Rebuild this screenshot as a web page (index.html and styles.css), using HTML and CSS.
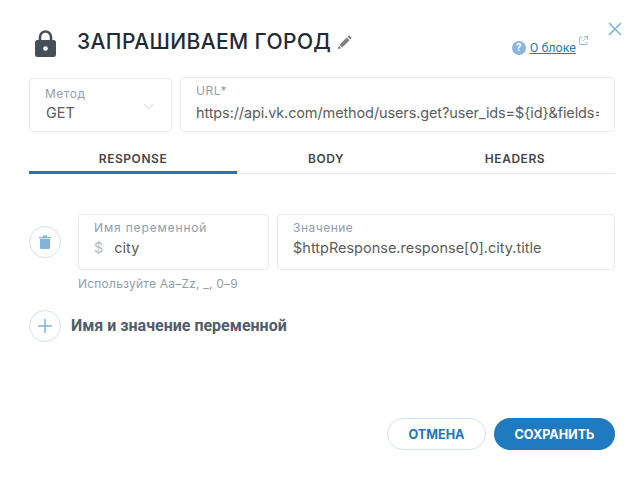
FILE: index.html
```html
<!DOCTYPE html>
<html lang="ru">
<head>
<meta charset="utf-8">
<title>Запрашиваем город</title>
<link rel="stylesheet" href="styles.css">
</head>
<body>
<main class="modal">
  <button class="close" aria-label="Закрыть">
    <svg width="14" height="14" viewBox="0 0 14 14"><path d="M1 1l12 12M13 1L1 13" stroke="#7fb3da" stroke-width="1.6" fill="none"/></svg>
  </button>
  <header class="head">
    <svg class="lock" width="21" height="27" viewBox="0 0 21 27"><path d="M5 11V7a5.500 5.500 0 0 1 11 0v4" fill="none" stroke="#454f5b" stroke-width="2.600"/><rect y="10" width="21" height="17" rx="2.500" fill="#454f5b"/><circle cx="10.500" cy="18.500" r="2.300" fill="#fff"/></svg>
    <h1 class="title">ЗАПРАШИВАЕМ ГОРОД</h1>
    <svg class="pencil" width="15" height="15" viewBox="0 0 16 16"><path d="M1 15l.8-3.800 2.900 2.900zM2.600 10.400l7.800-7.800 3 3-7.800 7.800zM11.200 1.800l1-1a1 1 0 0 1 1.400 0l1.600 1.600a1 1 0 0 1 0 1.400l-1 1z" fill="#808080"/></svg>
    <div class="about">
      <span class="help">?</span>
      <a class="about-link" href="#">О блоке</a>
      <svg class="ext" width="9" height="9" viewBox="0 0 9 9"><path d="M3.500 1H.5v7.500h7.500V5.500M5 .5h3.500V4M8.500 .5L4 5" fill="none" stroke="#7fb3da" stroke-width=".8"/></svg>
    </div>
  </header>

  <section class="request">
    <div class="field method">
      <span class="label">Метод</span>
      <span class="value get">GET</span>
      <svg class="chev" width="11" height="7" viewBox="0 0 11 7"><path d="M.7.7l4.800 4.800L10.300.7" fill="none" stroke="#e2e5e8" stroke-width="1.300"/></svg>
    </div>
    <div class="field url">
      <span class="label">URL*</span>
      <span class="value clip">https://api.vk.com/method/users.get?user_ids=${id}&amp;fields=</span>
    </div>
  </section>

  <nav class="tabs">
    <a class="tab active">RESPONSE</a>
    <a class="tab">BODY</a>
    <a class="tab">HEADERS</a>
  </nav>

  <section class="var-row">
    <button class="round" aria-label="Удалить">
      <svg width="12" height="14" viewBox="0 0 12 14"><path d="M0 2h12v1.300H0zM4 .5h4V2H4zM1 4h10v8.500a1.500 1.500 0 0 1-1.500 1.500h-7A1.500 1.500 0 0 1 1 12.500z" fill="#7fb3da"/></svg>
    </button>
    <div class="field name">
      <span class="label wide">Имя переменной</span>
      <span class="value"><span class="dollar">$</span>city</span>
    </div>
    <div class="field val">
      <span class="label">Значение</span>
      <span class="value">$httpResponse.response[0].city.title</span>
    </div>
  </section>
  <p class="hint">Используйте Aa–Zz, _, 0–9</p>

  <section class="add-row">
    <button class="round" aria-label="Добавить">
      <svg width="14" height="14" viewBox="0 0 14 14"><path d="M7 0v14M0 7h14" stroke="#7fb3da" stroke-width="1.500" fill="none"/></svg>
    </button>
    <span class="add-text">Имя и значение переменной</span>
  </section>

  <footer class="actions">
    <button class="btn ghost">ОТМЕНА</button>
    <button class="btn primary">СОХРАНИТЬ</button>
  </footer>
</main>
</body>
</html>
```
FILE: styles.css
```css
* { box-sizing: border-box; }
html, body { margin: 0; background: #fff; }
body { font-family: "Inter", "Open Sans", sans-serif; color: #454f5b; }
button { font-family: inherit; padding: 0; cursor: pointer; }
.modal { position: relative; width: 642px; height: 479px; padding: 28px 27px 0 29px; overflow: hidden; }
.close { position: absolute; top: 22px; right: 20px; width: 14px; height: 14px; border: 0; background: none; display: flex; }
.head { display: flex; align-items: center; height: 30px; padding-left: 6px; }
.lock { flex: none; }
.title { margin: 0 0 2px 21px; font-size: 21px; line-height: 26px; font-weight: 500; color: #212b36; letter-spacing: .4px; white-space: nowrap; }
.pencil { margin: 0 0 2px 6px; flex: none; }
.about { margin-left: auto; margin-top: 9px; margin-right: 39px; display: flex; align-items: center; font-family: "Roboto", sans-serif; font-size: 12.5px; position: relative; }
.help { width: 14px; height: 14px; border-radius: 50%; background: #8db4dd; color: #fff; font-size: 11px; font-weight: 700; line-height: 14px; text-align: center; margin-right: 4px; }
.about-link { color: #1f7abf; text-decoration: underline; }
.ext { position: absolute; right: -12px; top: -4px; }
.request { display: flex; gap: 8px; margin-top: 19px; height: 55px; align-items: center; }
.field { position: relative; display: flex; flex-direction: column; border: 1px solid #e8eaec; border-radius: 4px; background: #fff; }
.label { font-size: 12px; line-height: 14px; color: #919eab; letter-spacing: .5px; }
.label.wide { letter-spacing: .85px; }
.value { font-size: 14.5px; line-height: 18px; color: #5c5c5c; white-space: nowrap; }
.get { margin-left: 1px; }
.method { width: 143px; height: 54px; padding: 8px 15px 0; gap: 3px; }
.chev { position: absolute; right: 17px; top: 24px; }
.url { flex: 1; min-width: 0; height: 55px; padding: 6px 15px 0; gap: 6px; }
.clip { overflow: hidden; letter-spacing: -.12px; }
.tabs { display: grid; grid-template-columns: 208px 178px 200px; margin-top: 19px; height: 23px; border-bottom: 1px solid #e8eaec; }
.tab { text-align: center; font-size: 12px; line-height: 16px; font-weight: 600; color: #454545; letter-spacing: .55px; }
.tab.active { height: 23px; border-bottom: 3px solid #1f77b4; }
.var-row { display: flex; align-items: center; margin-top: 40px; height: 56px; }
.round { flex: none; width: 32px; height: 32px; border: 1px solid #cfe2f3; border-radius: 50%; background: #fff; display: flex; align-items: center; justify-content: center; }
.name { margin-left: 17px; width: 191px; height: 56px; padding: 6px 15px 0; gap: 4px; }
.dollar { color: #b5bcc3; margin-right: 11px; }
.val { flex: 1; margin-left: 8px; height: 56px; padding: 6px 15px 0; gap: 4px; }
.hint { margin: 7px 0 0 49px; font-size: 12px; line-height: 14px; color: #919eab; letter-spacing: .22px; }
.add-row { display: flex; align-items: center; margin-top: 19px; }
.add-text { margin: 0 0 2px 10px; font-family: "Roboto", sans-serif; font-size: 16px; font-weight: 700; color: #525c69; }
.actions { position: absolute; right: 27px; top: 418px; display: flex; gap: 8px; }
.btn { height: 32px; border-radius: 16px; font-size: 12.6px; font-weight: 700; }
.ghost { width: 99px; border: 1px solid #cfe2f3; background: #fff; color: #1f77b4; }
.primary { width: 121px; border: 0; background: #1f7abf; color: #fff; }
```
